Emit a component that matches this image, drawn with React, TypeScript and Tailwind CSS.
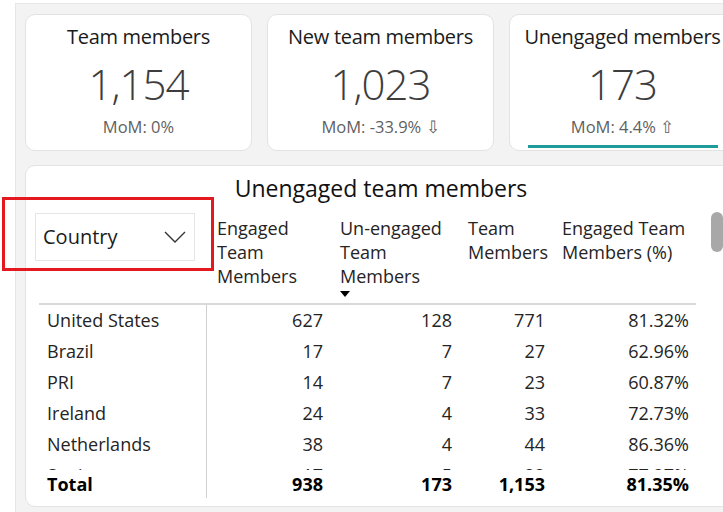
import React from 'react'

type Row = { country: string; engaged: string; unengaged: string; team: string; pct: string }

const rows: Row[] = [
  { country: 'United States', engaged: '627', unengaged: '128', team: '771', pct: '81.32%' },
  { country: 'Brazil',        engaged: '17',  unengaged: '7',   team: '27',  pct: '62.96%' },
  { country: 'PRI',           engaged: '14',  unengaged: '7',   team: '23',  pct: '60.87%' },
  { country: 'Ireland',       engaged: '24',  unengaged: '4',   team: '33',  pct: '72.73%' },
  { country: 'Netherlands',   engaged: '38',  unengaged: '4',   team: '44',  pct: '86.36%' },
  { country: 'Spain',         engaged: '17',  unengaged: '5',   team: '22',  pct: '77.27%' },
]

const cols = 'grid w-[657px] grid-cols-[168px_123px_130px_93px_143px]'

function KpiCard({ title, value, mom, accent }: { title: string; value: string; mom: string; accent?: boolean }) {
  return (
    <div className="w-[227px] h-[137px] shrink-0 rounded-[10px] border border-[#e3e3e3] bg-white flex flex-col items-center pt-[8px]">
      <div className="text-[20px] leading-[28px] tracking-[-0.3px] text-[#1b1b1b] whitespace-nowrap">{title}</div>
      <div className="mt-[7px] text-[42px] leading-[52px] font-light tracking-[-1px] text-[#3d3d3d]">{value}</div>
      <div className="mt-[7px] text-[16.5px] leading-[20px] text-[#5f5f5f] whitespace-nowrap">{mom}</div>
      {accent && <div className="mt-auto mb-[2px] w-[190px] h-[3px] bg-[#1f9c9a]" />}
    </div>
  )
}

export default function App() {
  return (
    <div
      className="relative w-[723px] h-[512px] overflow-hidden bg-white"
      style={{ fontFamily: '"Open Sans", "Noto Sans", sans-serif' }}
    >
      {/* Canvas */}
      <div className="ml-[15px] mt-[3px] w-[760px] h-[509px] bg-[#f3f3f3] border-l border-t border-[#e6e6e6] pl-[9px] pt-[10px]">
        {/* KPI cards */}
        <div className="flex gap-[15px]">
          <KpiCard title="Team members" value="1,154" mom="MoM: 0%" />
          <KpiCard title="New team members" value="1,023" mom="MoM: -33.9% ⇩" />
          <KpiCard title="Unengaged members" value="173" mom="MoM: 4.4% ⇧" accent />
        </div>

        {/* Table panel */}
        <div className="relative mt-[14px] w-[712px] h-[342px] rounded-[10px] border border-[#e3e3e3] bg-white px-[13px] pt-[7px]">
          <div className="text-center text-[23px] leading-[30px] text-[#111]">Unengaged team members</div>

          {/* header */}
          <div className={`${cols} mt-[10px] h-[92px] border-b-2 border-[#d9d9d9] text-[18px] leading-[24px] text-[#252423]`}>
            <div className="-ml-[4px]">
              <div className="w-[160px] h-[48px] border border-[#e5e5e5] flex items-center justify-between pl-[7px] pr-[8px]">
                <span className="text-[20px] text-[#1b1b1b]">Country</span>
                <svg width="22" height="12" viewBox="0 0 22 12" fill="none">
                  <path d="M1 1l10 10L21 1" stroke="#333" strokeWidth="1.4" />
                </svg>
              </div>
            </div>
            <div className="pl-[10px] pt-[3px]">Engaged<br />Team<br />Members</div>
            <div className="pl-[10px] pt-[3px]">
              Un-engaged<br />Team<br />Members
              <div className="mt-[3px] w-0 h-0 border-l-[5px] border-r-[5px] border-t-[6px] border-l-transparent border-r-transparent border-t-black" />
            </div>
            <div className="pl-[8px] pt-[3px]">Team<br />Members</div>
            <div className="pl-[9px] pt-[3px]">Engaged Team<br />Members (%)</div>
          </div>

          {/* body */}
          <div className="text-[18px] text-[#252423]">
            <div className="h-[165px] overflow-hidden">
              {rows.map(r => (
                <div key={r.country} className={`${cols} h-[31px] items-center`}>
                  <div className="pl-[8px] border-r border-[#d0d0d0] h-full flex items-center">{r.country}</div>
                  <div className="text-right pr-[7px]">{r.engaged}</div>
                  <div className="text-right pr-[8px]">{r.unengaged}</div>
                  <div className="text-right pr-[8px]">{r.team}</div>
                  <div className="text-right pr-[7px]">{r.pct}</div>
                </div>
              ))}
            </div>
            <div className={`${cols} h-[28px] items-center font-bold text-black`}>
              <div className="pl-[8px] border-r border-[#d0d0d0] h-full flex items-center">Total</div>
              <div className="text-right pr-[7px]">938</div>
              <div className="text-right pr-[8px]">173</div>
              <div className="text-right pr-[8px]">1,153</div>
              <div className="text-right pr-[7px]">81.35%</div>
            </div>
          </div>

          {/* scrollbar thumb */}
          <div className="absolute left-[685px] top-[46px] w-[12px] h-[40px] rounded-full bg-[#a8a8a8]" />
        </div>
      </div>

      {/* highlight annotation */}
      <div className="absolute left-[2px] top-[197px] w-[212px] h-[74px] border-[3px] border-[#e3191f]" />
    </div>
  )
}
